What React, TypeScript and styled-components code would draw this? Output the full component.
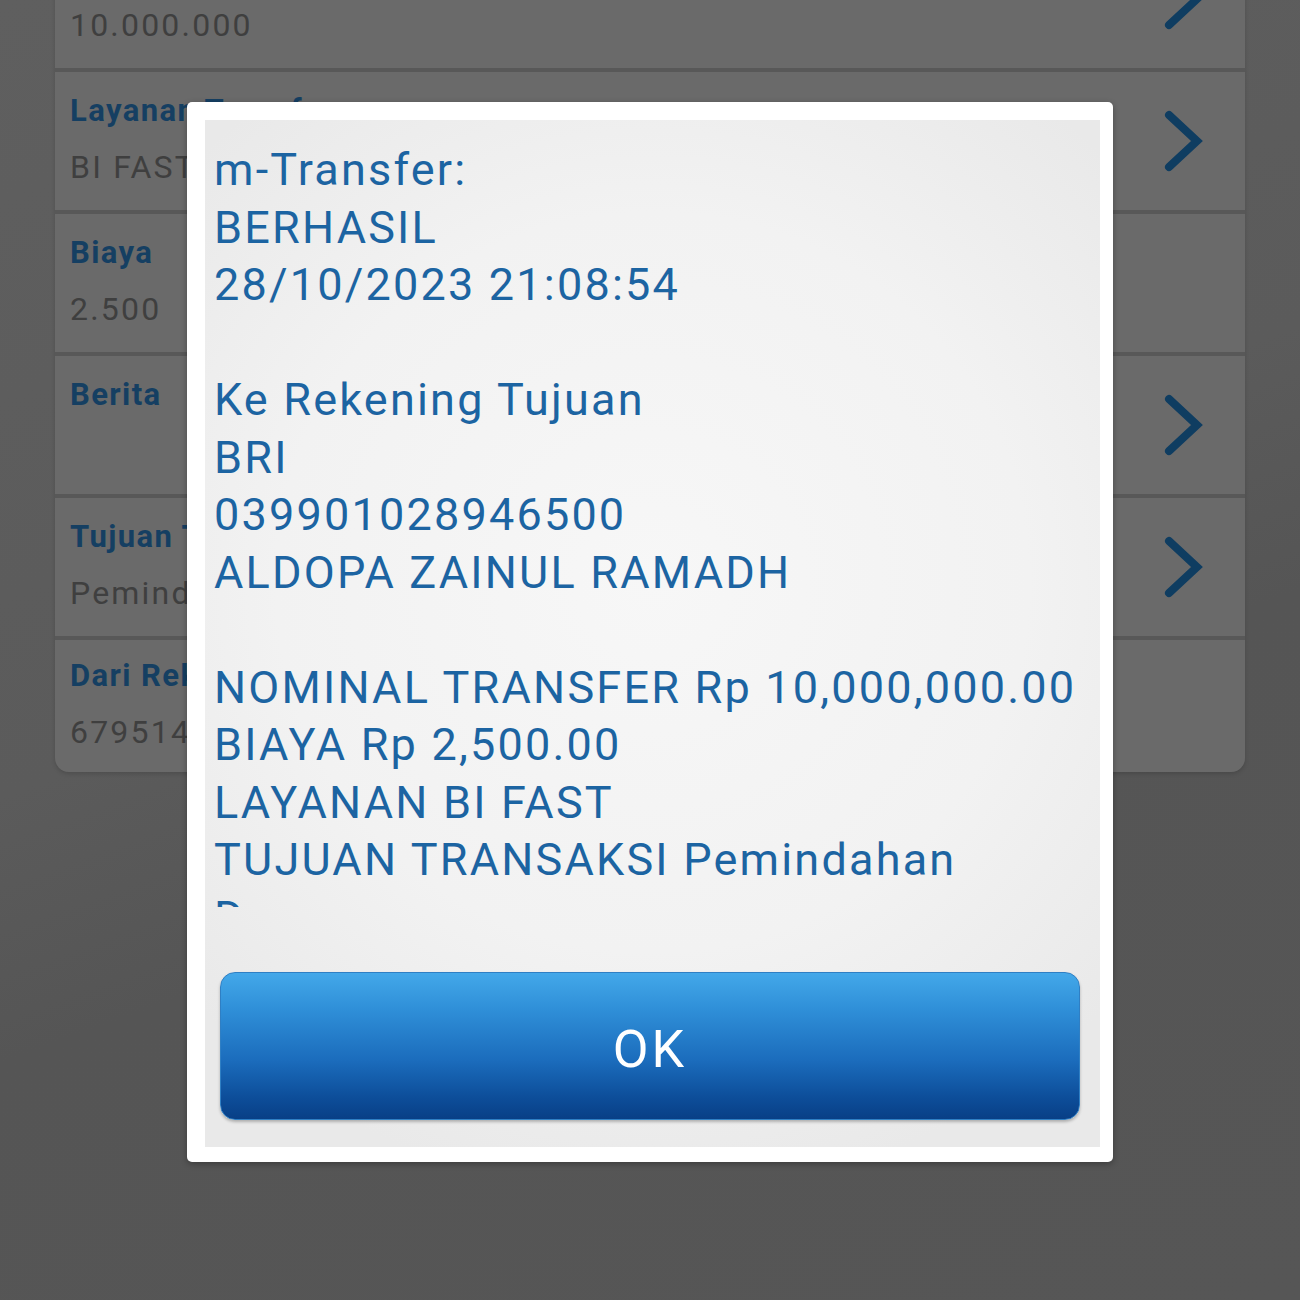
import { createGlobalStyle } from "styled-components";
import styled from "styled-components";

const GlobalStyle = createGlobalStyle`
  html, body {
    margin: 0;
    padding: 0;
    background: #565656;
  }
  * {
    box-sizing: border-box;
  }
`;

const Page = styled.div`
  position: relative;
  width: 1300px;
  height: 1300px;
  overflow: hidden;
  font-family: Roboto, "Noto Sans", sans-serif;
  background: linear-gradient(160deg, #5f5f5f 0%, #5b5b5b 45%, #555555 60%, #565656 100%);
`;

const FormCard = styled.div`
  margin: -70px 55px 0 55px;
  background: #585858;
  border-radius: 0 0 14px 14px;
  display: flex;
  flex-direction: column;
  gap: 4px;
  overflow: hidden;
  box-shadow: 0 2px 4px rgba(0, 0, 0, 0.15);
`;

const Row = styled.div<{ $last?: boolean }>`
  height: ${({ $last }) => ($last ? "132px" : "138px")};
  background: #6a6a6a;
  display: flex;
  align-items: center;
  justify-content: space-between;
  padding: 0 42px 0 15px;
`;

const RowText = styled.div`
  display: flex;
  flex-direction: column;
  gap: 14px;
  padding-bottom: 4px;
  white-space: nowrap;
`;

const Label = styled.div`
  font-size: 31px;
  font-weight: 700;
  letter-spacing: 1.4px;
  color: #153f62;
  line-height: 42px;
`;

const Value = styled.div`
  font-size: 32px;
  letter-spacing: 2.2px;
  color: #3f3f3f;
  line-height: 42px;
  min-height: 42px;
`;

const Chevron = () => (
  <svg width="40" height="62" viewBox="0 0 40 62">
    <path
      d="M6 5 L34 31 L6 57"
      fill="none"
      stroke="#0f3d61"
      strokeWidth="8"
      strokeLinecap="round"
      strokeLinejoin="miter"
    />
  </svg>
);

const Overlay = styled.div`
  position: absolute;
  inset: 0;
  display: flex;
  justify-content: center;
  align-items: flex-start;
  padding-top: 102px;
`;

const Dialog = styled.div`
  width: 926px;
  height: 1060px;
  background: #ffffff;
  border-radius: 5px;
  padding: 18px 13px 15px 18px;
  box-shadow: 0 2px 6px rgba(0, 0, 0, 0.3);
  display: flex;
`;

const Panel = styled.div`
  flex: 1;
  display: flex;
  flex-direction: column;
  background: radial-gradient(ellipse 70% 60% at 50% 45%, #f7f7f7 0%, #f2f2f2 60%, #e9e9e9 100%);
  padding: 21px 20px 27px 9px;
`;

const Message = styled.div`
  height: 766px;
  overflow: hidden;
  font-size: 45px;
  letter-spacing: 2.2px;
  line-height: 57.5px;
  color: #1c64a2;
  white-space: pre-wrap;
`;

const OkButton = styled.button`
  margin: 65px 0 0 6px;
  height: 148px;
  border: 1px solid #2f7fc4;
  border-radius: 15px;
  background: linear-gradient(180deg, #43a8e9 0%, #2f8fd8 25%, #1b6cbc 60%, #0d4e9a 85%, #083f86 100%);
  color: #ffffff;
  font-family: Roboto, "Noto Sans", sans-serif;
  font-size: 52px;
  letter-spacing: 3px;
  padding-top: 8px;
  box-shadow: 0 2px 3px rgba(0, 0, 0, 0.25);
  cursor: pointer;
`;

const rows = [
  { label: "Jumlah", value: "10.000.000", chevron: true },
  { label: "Layanan Transfer", value: "BI FAST", chevron: true },
  { label: "Biaya", value: "2.500", chevron: false },
  { label: "Berita", value: "", chevron: true },
  { label: "Tujuan Transaksi", value: "Pemindahan Dana", chevron: true },
  { label: "Dari Rekening", value: "6795145678", chevron: false },
];

const message = [
  "m-Transfer:",
  "BERHASIL",
  "28/10/2023 21:08:54",
  "",
  "Ke Rekening Tujuan",
  "BRI",
  "039901028946500",
  "ALDOPA ZAINUL RAMADH",
  "",
  "NOMINAL TRANSFER Rp 10,000,000.00",
  "BIAYA Rp 2,500.00",
  "LAYANAN BI FAST",
  "TUJUAN TRANSAKSI Pemindahan",
  "Dana",
  "BERITA -",
].join("\n");

const App = () => {
  return (
    <Page>
      <GlobalStyle />
      <FormCard>
        {rows.map((row, index) => (
          <Row key={index} $last={index === rows.length - 1}>
            <RowText>
              <Label>{row.label}</Label>
              <Value>{row.value}</Value>
            </RowText>
            {row.chevron ? <Chevron /> : null}
          </Row>
        ))}
      </FormCard>
      <Overlay>
        <Dialog>
          <Panel>
            <Message>{message}</Message>
            <OkButton>OK</OkButton>
          </Panel>
        </Dialog>
      </Overlay>
    </Page>
  );
};

export default App;
